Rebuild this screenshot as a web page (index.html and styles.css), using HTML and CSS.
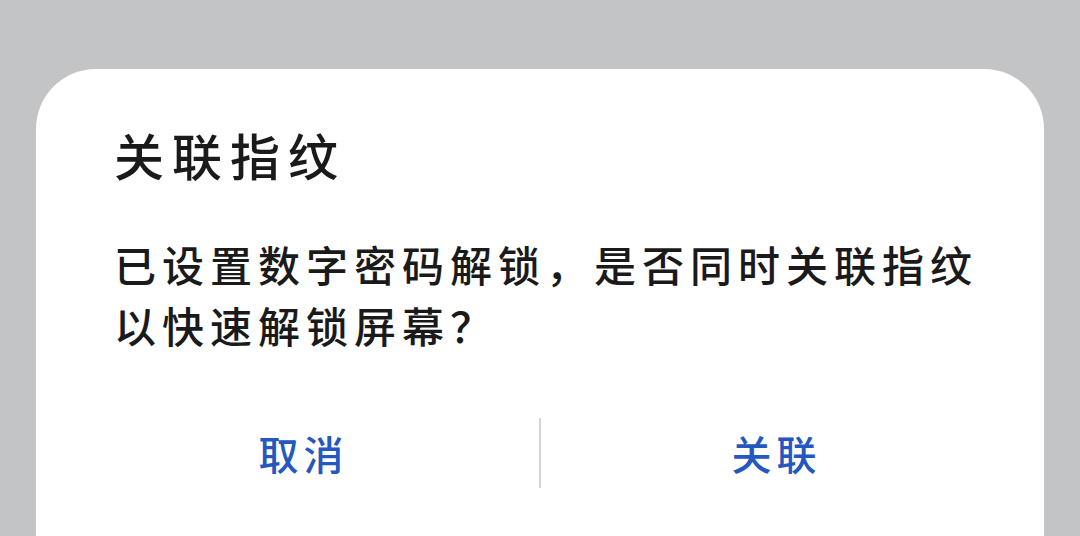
FILE: index.html
```html
<!DOCTYPE html>
<html>
<head>
    <title>关联指纹</title>
    <link rel="stylesheet" href="styles.css">
</head>
<body>

<div class="dialog">
    <h2 class="title">关联指纹</h2>
    <p class="message">已设置数字密码解锁，是否同时关联指纹以快速解锁屏幕？</p>
    <div class="actions">
        <div class="btn">取消</div>
        <div class="divider"></div>
        <div class="btn">关联</div>
    </div>
</div>

</body>
</html>
```

FILE: styles.css
```css
body {
    margin: 0;
    height: 536px;
    overflow: hidden;
    background: #c3c4c6;
    font-family: "Noto Sans CJK SC", sans-serif;
}

.dialog {
    margin: 69px 36px 0 36px;
    height: 520px;
    padding: 50px 32px 0 32px;
    background: white;
    border-radius: 60px;
}

.title {
    margin: 0 0 0 46px;
    font-size: 50px;
    font-weight: 500;
    line-height: 70px;
    letter-spacing: 8px;
    color: #1a1a1a;
}

.message {
    margin: 44px 0 0 46px;
    width: 880px;
    font-size: 42px;
    font-weight: 500;
    line-height: 61px;
    letter-spacing: 6px;
    color: #1a1a1a;
}

.actions {
    display: flex;
    align-items: center;
    margin-top: 62px;
    height: 72px;
}

.btn {
    flex: 1;
    text-align: center;
    font-size: 40px;
    font-weight: 500;
    letter-spacing: 5px;
    color: #2458c0;
}

.divider {
    width: 2px;
    height: 70px;
    background: #d4d4d4;
}
```
